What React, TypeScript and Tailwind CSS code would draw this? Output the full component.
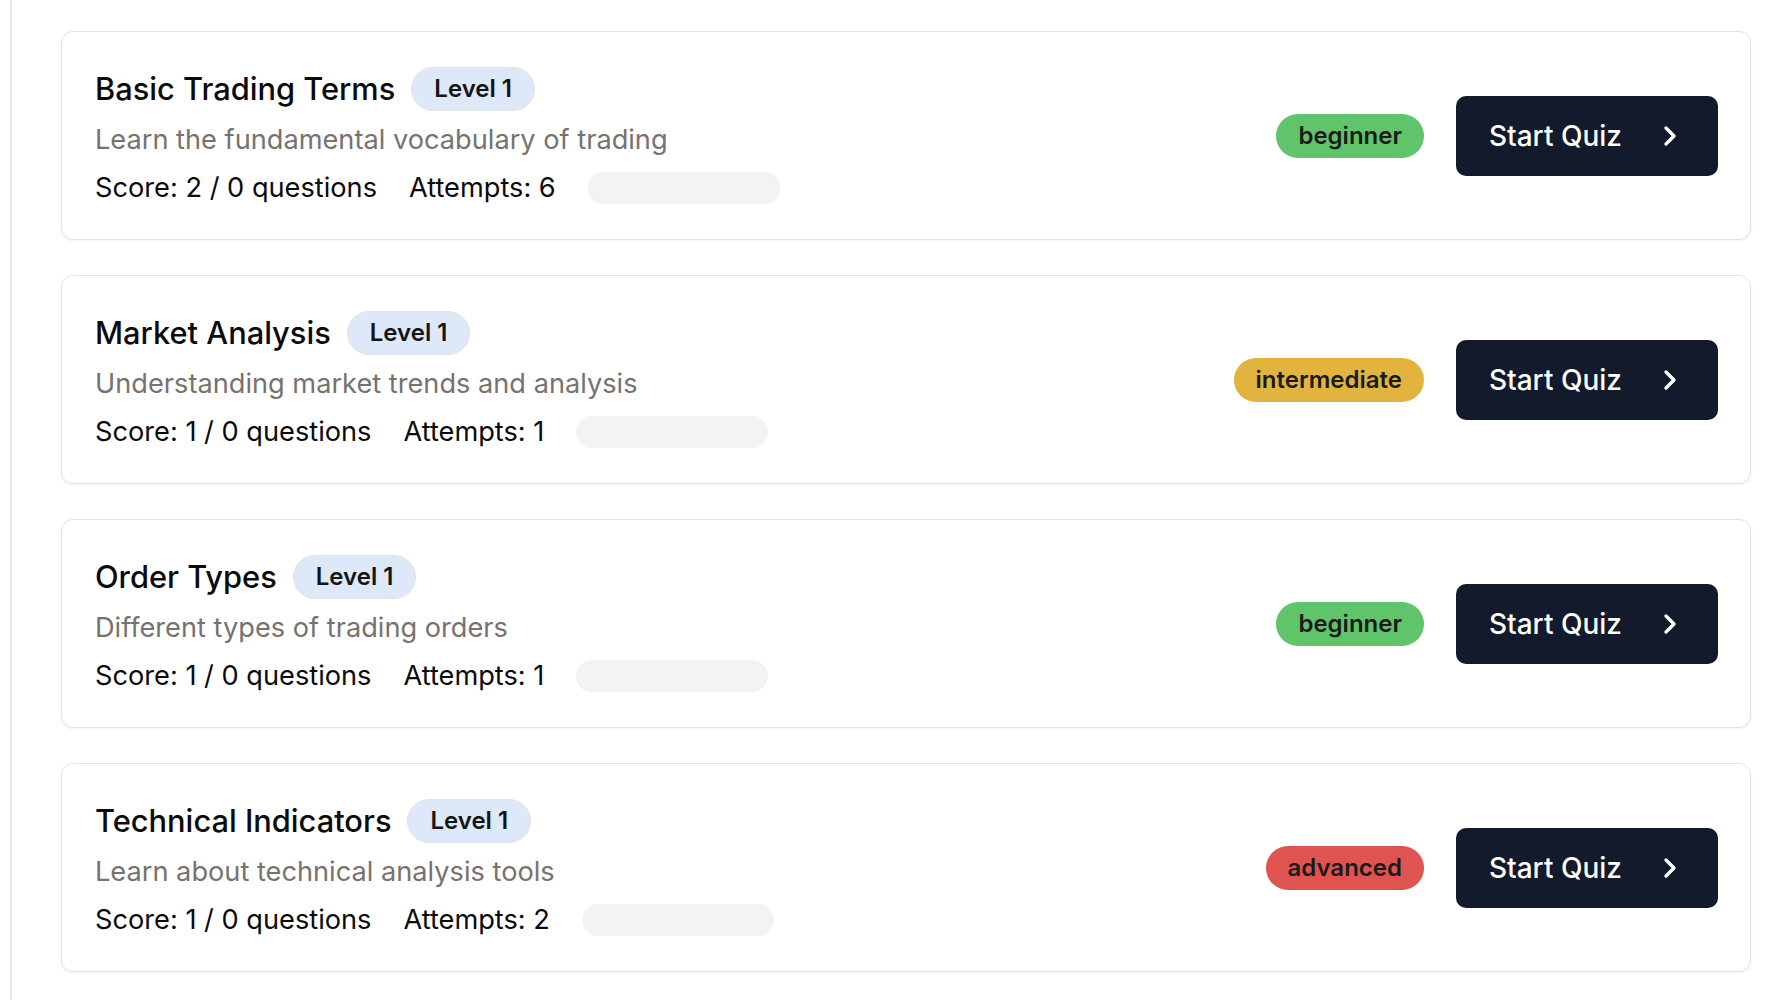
import { ChevronRight } from 'lucide-react';

type Quiz = {
  title: string;
  level: number;
  description: string;
  score: number;
  questions: number;
  attempts: number;
  difficulty: 'beginner' | 'intermediate' | 'advanced';
};

const quizzes: Quiz[] = [
  {
    title: 'Basic Trading Terms',
    level: 1,
    description: 'Learn the fundamental vocabulary of trading',
    score: 2,
    questions: 0,
    attempts: 6,
    difficulty: 'beginner',
  },
  {
    title: 'Market Analysis',
    level: 1,
    description: 'Understanding market trends and analysis',
    score: 1,
    questions: 0,
    attempts: 1,
    difficulty: 'intermediate',
  },
  {
    title: 'Order Types',
    level: 1,
    description: 'Different types of trading orders',
    score: 1,
    questions: 0,
    attempts: 1,
    difficulty: 'beginner',
  },
  {
    title: 'Technical Indicators',
    level: 1,
    description: 'Learn about technical analysis tools',
    score: 1,
    questions: 0,
    attempts: 2,
    difficulty: 'advanced',
  },
];

const difficultyStyles = {
  beginner: 'bg-[#5fc46a]',
  intermediate: 'bg-[#e2b43f]',
  advanced: 'bg-[#df5450]',
};

function QuizCard({ quiz }: { quiz: Quiz }) {
  return (
    <div className="flex items-center justify-between rounded-[12px] border border-[#e4e4e4] bg-white py-[30px] pl-[33px] pr-[32px] shadow-[0_1px_3px_rgba(0,0,0,0.06)]">
      {/* Left: info */}
      <div className="flex flex-col pt-[5px]">
        <div className="flex h-[44px] items-center gap-[16px]">
          <h3 className="text-[30.8px] font-medium leading-none text-[#0b0b0b]">{quiz.title}</h3>
          <span className="flex h-[44px] items-center rounded-full border border-[#e6e1dc] bg-[#dde8f9] px-[22px] text-[24px] font-semibold text-[#141414]">
            Level {quiz.level}
          </span>
        </div>
        <p className="mt-[8px] text-[27.2px] leading-[42px] text-[#77726e]">{quiz.description}</p>
        <div className="mt-[6px] flex h-[42px] items-center gap-[32px] text-[27.2px] text-[#0b0b0b]">
          <span>
            Score: {quiz.score} / {quiz.questions} questions
          </span>
          <span>Attempts: {quiz.attempts}</span>
          <div className="h-[32px] w-[192px] rounded-full bg-[#f3f3f2]" />
        </div>
      </div>

      {/* Right: difficulty + action */}
      <div className="flex items-center gap-[32px]">
        <span
          className={`flex h-[44px] items-center rounded-full px-[22px] text-[24px] font-semibold text-[#1a1a1a] ${difficultyStyles[quiz.difficulty]}`}
        >
          {quiz.difficulty}
        </span>
        <button
          type="button"
          className="flex h-[80px] items-center gap-[32px] rounded-[10px] bg-[#121a2b] pl-[33px] pr-[32px] text-[28px] font-medium text-white"
        >
          Start Quiz
          <ChevronRight size={32} strokeWidth={2.5} />
        </button>
      </div>
    </div>
  );
}

export default function App() {
  return (
    <div
      className="min-h-screen bg-white pl-[10px]"
      style={{ fontFamily: 'Inter, "Noto Sans", sans-serif' }}
    >
      <div className="min-h-screen border-l-2 border-[#e8e8e8] pl-[49px] pr-[37px] pt-[31px] pb-[30px]">
        <div className="flex flex-col gap-[35px]">
          {quizzes.map((quiz) => (
            <QuizCard key={quiz.title} quiz={quiz} />
          ))}
        </div>
      </div>
    </div>
  );
}
